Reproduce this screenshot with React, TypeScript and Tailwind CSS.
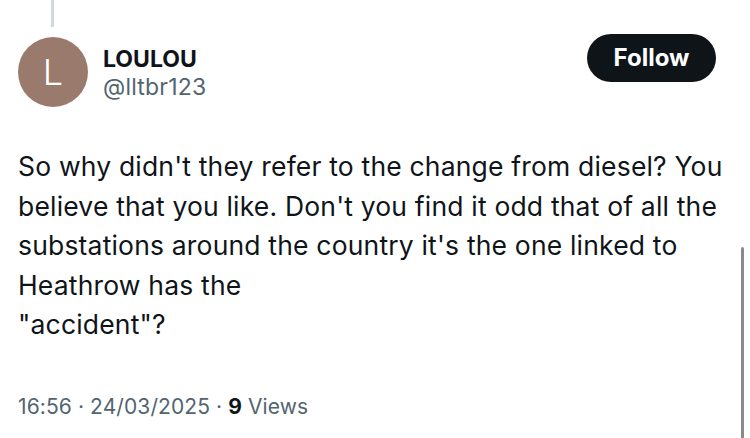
import React from 'react';

const bodyLines = [
  "So why didn't they refer to the change from diesel? You",
  "believe that you like. Don't you find it odd that of all the",
  "substations around the country it's the one linked to",
  'Heathrow has the',
  '"accident"?',
];

const App: React.FC = () => {
  return (
    <div
      className="relative w-[750px] h-[438px] overflow-hidden bg-white text-[#0f1419]"
      style={{ fontFamily: 'Inter, "Noto Sans", sans-serif' }}
    >
      {/* thread connector */}
      <div className="pl-[51px]">
        <div className="w-[3px] h-[27px] bg-[#cfd9de]" />
      </div>

      {/* header */}
      <div className="flex items-start pl-[18px] pr-[34px] pt-[7px]">
        <div className="w-[70px] h-[70px] mt-[3px] rounded-full bg-[#9a7a6d] flex items-center justify-center text-white text-[36px] font-light">
          L
        </div>
        <div className="ml-[15px] flex flex-col mt-[11px]">
          <span className="text-[23px] font-bold leading-[28px]">LOULOU</span>
          <span className="text-[23px] leading-[28px] text-[#536471] tracking-[0.2px]">@lltbr123</span>
        </div>
        <div className="ml-auto">
          <button className="w-[129px] h-[48px] rounded-full bg-[#0f1419] text-white text-[24px] font-bold">
            Follow
          </button>
        </div>
      </div>

      {/* body */}
      <div className="pl-[18px] pt-[40px] text-[26.5px] leading-[39.5px] tracking-[0.18px]">
        {bodyLines.map((line, i) => (
          <div key={i} className="whitespace-nowrap">{line}</div>
        ))}
      </div>

      {/* meta */}
      <div className="pl-[18px] pt-[46px] text-[21px] text-[#536471] tracking-[0.1px]">
        16:56 · 24/03/2025 · <span className="font-bold text-[#0f1419]">9</span> Views
      </div>

      {/* scrollbar */}
      <div className="absolute right-[6px] top-[247px] w-[3px] h-[200px] rounded-full bg-[#8a8a8a]" />
    </div>
  );
};

export default App;
